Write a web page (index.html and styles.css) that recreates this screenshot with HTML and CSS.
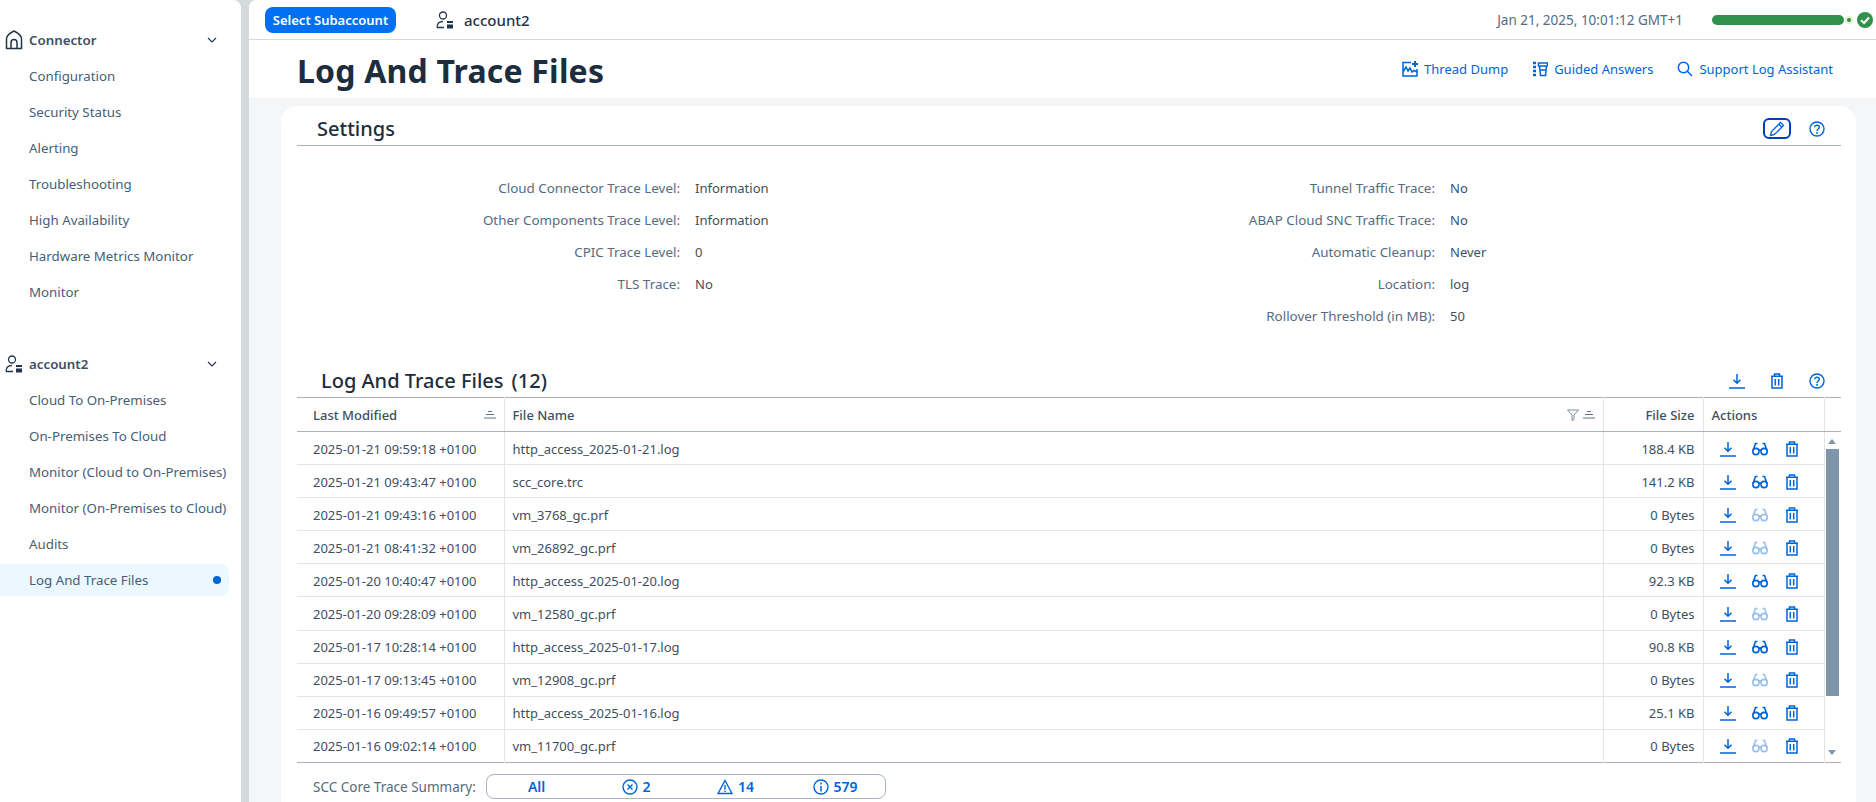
FILE: index.html
```html
<!DOCTYPE html>
<html>
	<head>
		<title>Log And Trace Files</title>
		<link rel="stylesheet" href="styles.css">
	</head>
	<body>
		<svg class="defs" width="0" height="0">
			<symbol id="i-home" viewBox="0 0 18 20"><path d="M1.5 18.5V8.5C1.5 6 5 3 9 1C13 3 16.5 6 16.5 8.5V18.5ZM6 18.5V12.500a3 3 0 0 1 6 0V18.500" fill="none" stroke="currentColor" stroke-width="1.500" stroke-linejoin="round"/></symbol>
			<symbol id="i-account" viewBox="0 0 18 18"><circle cx="7" cy="4.500" r="3.500" fill="none" stroke="currentColor" stroke-width="1.300"/><path d="M1 16.500C1 12 3 10.500 7 10.500M1 16.500H8" fill="none" stroke="currentColor" stroke-width="1.300"/><rect x="11" y="10" width="6" height="2" fill="currentColor"/><rect x="11" y="13.500" width="6" height="4" fill="currentColor"/></symbol>
			<symbol id="i-down" viewBox="0 0 16 16"><path d="M8 1V10M4.500 6.800L8 10.300L11.500 6.800M0 15H16" fill="none" stroke="currentColor" stroke-width="1.500"/></symbol>
			<symbol id="i-trash" viewBox="0 0 14 16"><path d="M1 3.200H13M4.500 3V1H9.500V3M2 3.200V15H12V3.200M5.300 6V12.500M8.700 6V12.500" fill="none" stroke="currentColor" stroke-width="1.500"/></symbol>
			<symbol id="i-help" viewBox="0 0 16 16"><circle cx="8" cy="8" r="7" fill="none" stroke="currentColor" stroke-width="1.400"/><path d="M5.700 6.300C5.700 3.500 10.300 3.500 10.300 6.300C10.300 8 8 8 8 10" fill="none" stroke="currentColor" stroke-width="1.400"/><rect x="7.200" y="11" width="1.600" height="1.700" fill="currentColor"/></symbol>
			<symbol id="i-glasses" viewBox="0 0 16 14"><circle cx="3.900" cy="9.500" r="3.100" fill="none" stroke="currentColor" stroke-width="1.600"/><circle cx="12.100" cy="9.500" r="3.100" fill="none" stroke="currentColor" stroke-width="1.600"/><path d="M6.500 8.500C7.300 7.800 8.700 7.800 9.500 8.500M1 8.500L3.500 1.500H5.500M15 8.500L12.500 1.500H10.500" fill="none" stroke="currentColor" stroke-width="1.600"/></symbol>
			<symbol id="i-sort" viewBox="0 0 12 8"><path d="M4 .5H8M2 3.500H10M0 7H12" fill="none" stroke="currentColor"/></symbol>
			<symbol id="i-chevron" viewBox="0 0 10 6"><path d="M1 1L5 5L9 1" fill="none" stroke="currentColor" stroke-width="1.100"/></symbol>
		</svg>

		<div class="app">
			<nav class="sidebar">
				<div class="nav-group">
					<div class="nav-head"><svg class="nav-icon"><use href="#i-home"/></svg><span>Connector</span><svg class="chev"><use href="#i-chevron"/></svg></div>
					<a class="nav-item">Configuration</a>
					<a class="nav-item">Security Status</a>
					<a class="nav-item">Alerting</a>
					<a class="nav-item">Troubleshooting</a>
					<a class="nav-item">High Availability</a>
					<a class="nav-item">Hardware Metrics Monitor</a>
					<a class="nav-item">Monitor</a>
				</div>
				<div class="nav-group">
					<div class="nav-head"><svg class="nav-icon"><use href="#i-account"/></svg><span>account2</span><svg class="chev"><use href="#i-chevron"/></svg></div>
					<a class="nav-item">Cloud To On-Premises</a>
					<a class="nav-item">On-Premises To Cloud</a>
					<a class="nav-item">Monitor (Cloud to On-Premises)</a>
					<a class="nav-item">Monitor (On-Premises to Cloud)</a>
					<a class="nav-item">Audits</a>
					<a class="nav-item active">Log And Trace Files<i class="dot"></i></a>
				</div>
			</nav>

			<main class="main">
				<header class="topbar">
					<button class="select-btn">Select Subaccount</button>
					<svg class="top-account"><use href="#i-account"/></svg>
					<span class="top-name">account2</span>
					<span class="top-date">Jan 21, 2025, 10:01:12 GMT+1</span>
					<div class="health">
						<div class="health-bar"></div>
						<div class="health-dot"></div>
						<svg class="health-ok" viewBox="0 0 16 16"><circle cx="8" cy="8" r="8" fill="#30914c"/><path d="M4 8.300L7 11L12 5.500" fill="none" stroke="#fff" stroke-width="2"/></svg>
					</div>
				</header>

				<div class="page-head">
					<h1>Log And Trace Files</h1>
					<div class="page-links">
						<a class="link">
							<svg class="link-icon" viewBox="0 0 16 16"><path d="M9 1.500H1V15H15V8M1 11L4 6L6 10L8 7L10 11L12 9.500L15 11" fill="none" stroke="currentColor" stroke-width="1.500"/><path d="M13 0V6M10 3H16" stroke="currentColor" stroke-width="2"/></svg>
							Thread Dump</a>
						<a class="link">
							<svg class="link-icon" viewBox="0 0 16 16"><path d="M1 2H4M1 6H4M1 10H4M1 14H4" stroke="currentColor" stroke-width="2.500"/><path d="M6.500 2H15.500V5H6.500ZM7.500 5L8.500 14.500H13.500L14.500 5M7.500 9H14.500" fill="none" stroke="currentColor" stroke-width="1.500"/></svg>
							Guided Answers</a>
						<a class="link">
							<svg class="link-icon" viewBox="0 0 16 16"><circle cx="6.500" cy="6.500" r="5.200" fill="none" stroke="currentColor" stroke-width="1.500"/><path d="M10.300 10.300L15 15" stroke="currentColor" stroke-width="1.500"/></svg>
							Support Log Assistant</a>
					</div>
				</div>

				<div class="content">
					<section class="card">
						<div class="settings-head">
							<h2>Settings</h2>
							<div class="settings-tools">
								<button class="edit-btn"><svg viewBox="0 0 16 16"><path d="M1.500 14.500L2.500 10.500L11.500 1.500L14.500 4.500L5.500 13.500ZM9.800 3.200L12.800 6.200" fill="none" stroke="currentColor" stroke-width="1.300"/></svg></button>
								<svg class="tool"><use href="#i-help"/></svg>
							</div>
						</div>

						<div class="form">
							<label>Cloud Connector Trace Level:</label><span>Information</span>
							<label>Tunnel Traffic Trace:</label><span>No</span>
							<label>Other Components Trace Level:</label><span>Information</span>
							<label>ABAP Cloud SNC Traffic Trace:</label><span>No</span>
							<label>CPIC Trace Level:</label><span>0</span>
							<label>Automatic Cleanup:</label><span>Never</span>
							<label>TLS Trace:</label><span>No</span>
							<label>Location:</label><span>log</span>
							<label class="form-right">Rollover Threshold (in MB):</label><span>50</span>
						</div>

						<div class="table-head">
							<h2>Log And Trace Files<span class="count">(12)</span></h2>
							<div class="table-tools">
								<svg class="tool"><use href="#i-down"/></svg>
								<svg class="tool"><use href="#i-trash"/></svg>
								<svg class="tool"><use href="#i-help"/></svg>
							</div>
						</div>

						<table class="files">
							<colgroup><col class="c-date"><col><col class="c-size"><col class="c-act"><col class="c-scroll"></colgroup>
							<thead>
								<tr>
									<th class="th-first"><div class="th-in">Last Modified<svg class="sort"><use href="#i-sort"/></svg></div></th>
									<th><div class="th-in">File Name<span class="th-icons"><svg class="filter" viewBox="0 0 12 12"><path d="M.5 1H11.500L7 6V10.500L5 11.500V6Z" fill="none" stroke="currentColor"/></svg><svg class="sort"><use href="#i-sort"/></svg></span></div></th>
									<th class="num">File Size</th>
									<th>Actions</th>
									<th></th>
								</tr>
							</thead>
							<tbody>
								<tr>
									<td>2025-01-21 09:59:18 +0100</td><td>http_access_2025-01-21.log</td><td class="num">188.4 KB</td>
									<td><div class="acts"><svg><use href="#i-down"/></svg><svg><use href="#i-glasses"/></svg><svg><use href="#i-trash"/></svg></div></td>
									<td class="scroll-cell" rowspan="10"><div class="scroll"><i class="arrow up"></i><div class="thumb"></div><i class="arrow dn"></i></div></td>
								</tr>
								<tr>
									<td>2025-01-21 09:43:47 +0100</td><td>scc_core.trc</td><td class="num">141.2 KB</td>
									<td><div class="acts"><svg><use href="#i-down"/></svg><svg><use href="#i-glasses"/></svg><svg><use href="#i-trash"/></svg></div></td>
								</tr>
								<tr>
									<td>2025-01-21 09:43:16 +0100</td><td>vm_3768_gc.prf</td><td class="num">0 Bytes</td>
									<td><div class="acts"><svg><use href="#i-down"/></svg><svg class="off"><use href="#i-glasses"/></svg><svg><use href="#i-trash"/></svg></div></td>
								</tr>
								<tr>
									<td>2025-01-21 08:41:32 +0100</td><td>vm_26892_gc.prf</td><td class="num">0 Bytes</td>
									<td><div class="acts"><svg><use href="#i-down"/></svg><svg class="off"><use href="#i-glasses"/></svg><svg><use href="#i-trash"/></svg></div></td>
								</tr>
								<tr>
									<td>2025-01-20 10:40:47 +0100</td><td>http_access_2025-01-20.log</td><td class="num">92.3 KB</td>
									<td><div class="acts"><svg><use href="#i-down"/></svg><svg><use href="#i-glasses"/></svg><svg><use href="#i-trash"/></svg></div></td>
								</tr>
								<tr>
									<td>2025-01-20 09:28:09 +0100</td><td>vm_12580_gc.prf</td><td class="num">0 Bytes</td>
									<td><div class="acts"><svg><use href="#i-down"/></svg><svg class="off"><use href="#i-glasses"/></svg><svg><use href="#i-trash"/></svg></div></td>
								</tr>
								<tr>
									<td>2025-01-17 10:28:14 +0100</td><td>http_access_2025-01-17.log</td><td class="num">90.8 KB</td>
									<td><div class="acts"><svg><use href="#i-down"/></svg><svg><use href="#i-glasses"/></svg><svg><use href="#i-trash"/></svg></div></td>
								</tr>
								<tr>
									<td>2025-01-17 09:13:45 +0100</td><td>vm_12908_gc.prf</td><td class="num">0 Bytes</td>
									<td><div class="acts"><svg><use href="#i-down"/></svg><svg class="off"><use href="#i-glasses"/></svg><svg><use href="#i-trash"/></svg></div></td>
								</tr>
								<tr>
									<td>2025-01-16 09:49:57 +0100</td><td>http_access_2025-01-16.log</td><td class="num">25.1 KB</td>
									<td><div class="acts"><svg><use href="#i-down"/></svg><svg><use href="#i-glasses"/></svg><svg><use href="#i-trash"/></svg></div></td>
								</tr>
								<tr>
									<td>2025-01-16 09:02:14 +0100</td><td>vm_11700_gc.prf</td><td class="num">0 Bytes</td>
									<td><div class="acts"><svg><use href="#i-down"/></svg><svg class="off"><use href="#i-glasses"/></svg><svg><use href="#i-trash"/></svg></div></td>
								</tr>
							</tbody>
						</table>

						<div class="summary">
							<span class="summary-label">SCC Core Trace Summary:</span>
							<div class="segments">
								<button>All</button>
								<button><svg viewBox="0 0 16 16"><circle cx="8" cy="8" r="7" fill="none" stroke="currentColor" stroke-width="1.400"/><path d="M5.500 5.500L10.500 10.500M10.500 5.500L5.500 10.500" stroke="currentColor" stroke-width="1.400"/></svg>2</button>
								<button><svg viewBox="0 0 16 16"><path d="M8 1.500L15 14.500H1ZM8 6V10.500M8 11.500V13" fill="none" stroke="currentColor" stroke-width="1.400"/></svg>14</button>
								<button><svg viewBox="0 0 16 16"><circle cx="8" cy="8" r="7" fill="none" stroke="currentColor" stroke-width="1.400"/><path d="M8 7V12.500M8 3.500V5.500" stroke="currentColor" stroke-width="1.500"/></svg>579</button>
							</div>
						</div>
					</section>
				</div>
			</main>
		</div>
	</body>
</html>
```

FILE: styles.css
```css
* {
	box-sizing: border-box;
}
html, body {
	height: 100%;
}
body {
	margin: 0;
	overflow: hidden;
	background-color: #d5dadd;
	font-family: "Noto Sans", sans-serif;
	font-size: 13px;
	color: #3d4f62;
}
.defs {
	position: absolute;
}
.app {
	display: flex;
	height: 100%;
	gap: 8px;
}

/* side navigation */
.sidebar {
	width: 241px;
	flex: none;
	padding-top: 22px;
	background-color: #fff;
	border-top-right-radius: 8px;
}
.nav-group {
	margin-bottom: 36px;
}
.nav-head {
	display: flex;
	align-items: center;
	height: 36px;
	padding-left: 5px;
	font-size: 13.3px;
	font-weight: 600;
	color: #3d4f62;
}
.nav-head span {
	flex: 1;
}
.nav-icon {
	width: 18px;
	height: 20px;
	margin-right: 6px;
	color: #223548;
}
.chev {
	width: 10px;
	height: 6px;
	margin-right: 24px;
	color: #223548;
}
.nav-item {
	display: flex;
	align-items: center;
	justify-content: space-between;
	width: 229px;
	height: 36px;
	padding: 0 8px 0 29px;
	font-size: 13.3px;
	white-space: nowrap;
	color: #475e75;
}
.nav-item.active {
	height: 32px;
	margin-top: 2px;
	background-color: #ebf8ff;
	border-radius: 0 8px 8px 0;
}
.dot {
	width: 8px;
	height: 8px;
	border-radius: 50%;
	background-color: #0064d9;
}

/* top bar */
.main {
	flex: 1;
	min-width: 0;
	display: flex;
	flex-direction: column;
	background-color: #f5f6f7;
	border-top-left-radius: 8px;
	overflow: hidden;
}
.topbar {
	display: flex;
	align-items: center;
	flex: none;
	height: 40px;
	padding: 0 3px 0 16px;
	background-color: #fff;
	border-bottom: 1px solid #d9d9d9;
}
.select-btn {
	width: 131px;
	height: 26px;
	padding: 0;
	border: 0;
	border-radius: 8px;
	background-color: #0070f2;
	color: #fff;
	font: 600 13px "Noto Sans", sans-serif;
}
.top-account {
	width: 18px;
	height: 18px;
	margin-left: 40px;
	color: #223548;
}
.top-name {
	flex: 1;
	margin-left: 10px;
	font-size: 15px;
	font-weight: 500;
	color: #223548;
}
.top-date {
	margin-right: 29px;
	font-size: 13.5px;
	color: #556b82;
}
.health {
	display: flex;
	align-items: center;
}
.health-bar {
	width: 132px;
	height: 10px;
	border-radius: 5px;
	background-color: #30914c;
}
.health-dot {
	width: 8px;
	height: 8px;
	margin: 0 4px 0 1px;
	border-radius: 50%;
	background-color: #30914c;
	border: 2px solid #e4f3c8;
}
.health-ok {
	width: 16px;
	height: 16px;
}

/* page title */
.page-head {
	display: flex;
	align-items: center;
	justify-content: space-between;
	flex: none;
	height: 58px;
	padding: 2px 43px 0 48px;
	background-color: #fff;
}
h1 {
	margin: 0;
	font-size: 32px;
	font-weight: 700;
	letter-spacing: 0.2px;
	color: #1d2d3e;
}
.page-links {
	display: flex;
	gap: 24px;
	padding-bottom: 3px;
}
.link {
	display: flex;
	align-items: center;
	gap: 6px;
	color: #0064d9;
}
.link-icon {
	width: 16px;
	height: 16px;
}

/* card */
.content {
	flex: 1;
	padding: 8px 20px 0 32px;
}
.card {
	height: 100%;
	padding: 0 15px 0 16px;
	background-color: #fff;
	border-radius: 16px 16px 0 0;
}
h2 {
	margin: 0;
	font-size: 20px;
	font-weight: 500;
	color: #1d2d3e;
}
.settings-head {
	display: flex;
	align-items: center;
	justify-content: space-between;
	height: 40px;
	padding: 6px 16px 0 20px;
	border-bottom: 1px solid #a8b3bd;
}
.settings-tools {
	display: flex;
	align-items: center;
	gap: 18px;
}
.edit-btn {
	display: flex;
	align-items: center;
	justify-content: center;
	width: 28px;
	height: 21px;
	padding: 0;
	border: 2px solid #0040b0;
	border-radius: 6px;
	background-color: #fff;
	color: #0064d9;
}
.edit-btn svg {
	width: 16px;
	height: 16px;
}
.tool {
	width: 16px;
	height: 16px;
	color: #0064d9;
}

/* settings form */
.form {
	display: grid;
	grid-template-columns: 383px 341px 384px auto;
	grid-auto-rows: 32px;
	column-gap: 15px;
	align-items: center;
	margin-top: 26px;
}
.form label {
	text-align: right;
	font-size: 13.4px;
	color: #556b82;
}
.form span {
	color: #3d4f62;
}
.form .form-right {
	grid-column-start: 3;
}

/* file table */
.table-head {
	display: flex;
	align-items: center;
	justify-content: space-between;
	height: 33px;
	margin-top: 32px;
	padding: 0 16px 0 24px;
}
.count {
	margin-left: 8px;
}
.table-tools {
	display: flex;
	gap: 24px;
}
.files {
	width: 100%;
	table-layout: fixed;
	border-collapse: collapse;
	border-top: 1px solid #a8b3bd;
	border-bottom: 1px solid #a8b3bd;
}
.c-date {
	width: 207px;
}
.c-size {
	width: 100px;
}
.c-act {
	width: 121px;
}
.c-scroll {
	width: 17px;
}
th {
	height: 34px;
	padding: 0 8px;
	text-align: left;
	font-weight: 500;
	color: #3d4f62;
	border-right: 1px solid #e5e5e5;
	border-bottom: 1px solid #a8b3bd;
}
th:last-child {
	border-right: 0;
}
.th-in {
	display: flex;
	align-items: center;
	justify-content: space-between;
}
.th-first .th-in {
	padding-left: 8px;
}
.th-icons {
	display: flex;
	align-items: center;
	gap: 4px;
	color: #7a8b9c;
}
.sort {
	width: 12px;
	height: 8px;
	color: #5b738b;
}
.filter {
	width: 12px;
	height: 12px;
}
td {
	height: 33px;
	padding: 1px 8px 0;
	white-space: nowrap;
	color: #3d4f62;
	border-right: 1px solid #e5e5e5;
	border-bottom: 1px solid #e5e5e5;
}
td:first-child {
	padding-left: 16px;
}
tbody tr:last-child td {
	border-bottom: 0;
}
.num {
	text-align: right;
}
.acts {
	display: flex;
	gap: 16px;
	padding-left: 8px;
	color: #0064d9;
}
.acts svg {
	width: 16px;
	height: 16px;
}
.acts .off {
	opacity: 0.4;
}
td.scroll-cell {
	padding: 0;
	border: 0;
	vertical-align: top;
}
.scroll {
	display: flex;
	flex-direction: column;
	align-items: center;
	height: 330px;
	width: 15px;
}
.arrow {
	width: 0;
	height: 0;
	border-left: 4px solid transparent;
	border-right: 4px solid transparent;
}
.arrow.up {
	margin-top: 7px;
	border-bottom: 5px solid #7f95aa;
}
.arrow.dn {
	margin-top: auto;
	margin-bottom: 7px;
	border-top: 5px solid #7f95aa;
}
.thumb {
	width: 13px;
	height: 247px;
	margin-top: 5px;
	background-color: #7f95aa;
}

/* summary */
.summary {
	display: flex;
	align-items: center;
	gap: 10px;
	margin-top: 11px;
	padding-left: 16px;
}
.summary-label {
	font-size: 13.5px;
	color: #556b82;
}
.segments {
	display: flex;
	width: 400px;
	height: 25px;
	border: 1px solid #a8b3bd;
	border-radius: 8px;
}
.segments button {
	display: flex;
	align-items: center;
	justify-content: center;
	gap: 5px;
	flex: 1;
	padding: 0;
	border: 0;
	background: none;
	color: #0064d9;
	font: 600 14px "Noto Sans", sans-serif;
}
.segments svg {
	width: 16px;
	height: 16px;
}
```
